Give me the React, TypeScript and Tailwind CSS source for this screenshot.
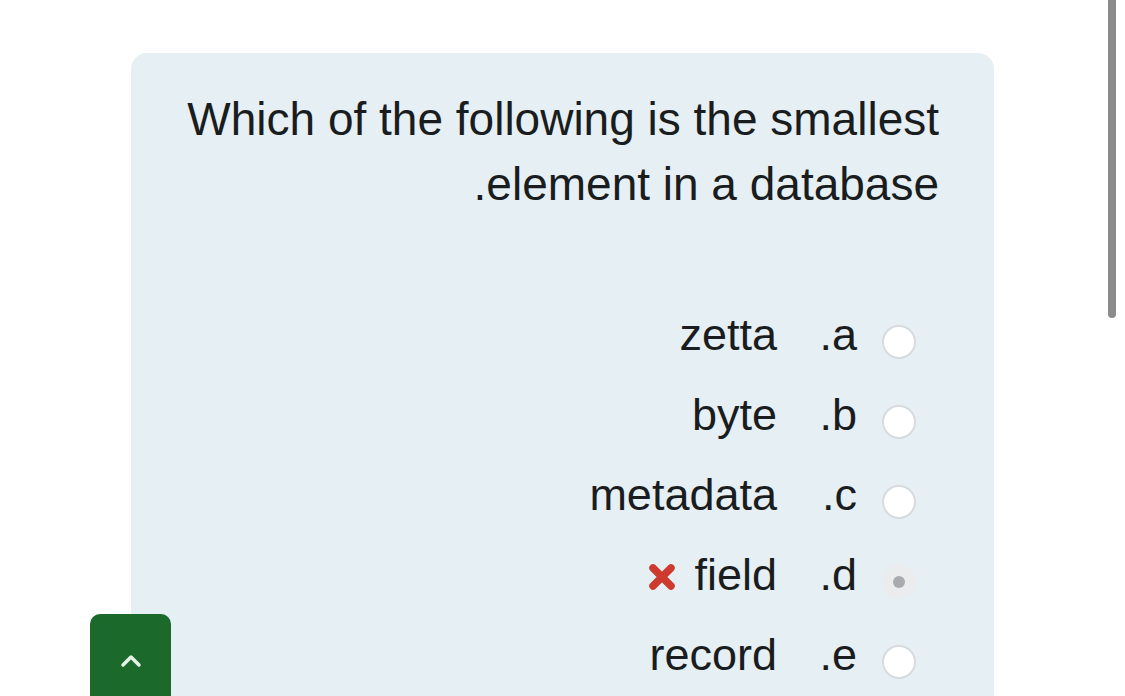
import { ChevronUp } from "lucide-react";

const options = [
  { key: ".a", text: "zetta", state: "empty" },
  { key: ".b", text: "byte", state: "empty" },
  { key: ".c", text: "metadata", state: "empty" },
  { key: ".d", text: "field", state: "wrong" },
  { key: ".e", text: "record", state: "empty" },
];

const RedX = () => (
  <svg width="28" height="28" viewBox="0 0 28 28" className="mr-[18px] mt-[4px]">
    <path d="M5 5 L23 23 M23 5 L5 23" stroke="#cf3a2e" strokeWidth="7.5" strokeLinecap="round" />
  </svg>
);

const App = () => {
  return (
    <div
      className="relative h-[696px] w-[1125px] overflow-hidden bg-white pl-[131px] pt-[53px] text-[#1a1d20]"
      style={{ fontFamily: '"Liberation Sans", Arial, sans-serif' }}
    >
      <div className="h-[700px] w-[863px] rounded-[16px] bg-[#e6eff3] pt-[34px] pr-[55px]">
        <p className="text-right text-[46px] leading-[65px]">
          Which of the following is the smallest
          <br />
          .element in a database
        </p>

        <div className="mt-[78px] mr-[23px] flex flex-col items-end">
          {options.map((o) => (
            <div key={o.key} className="flex h-[80px] items-center text-[45px] leading-[80px]">
              {o.state === "wrong" && <RedX />}
              <span>{o.text}</span>
              <span className="w-[80px] text-right">{o.key}</span>
              <div className="ml-[25px] mt-[14px]">
                {o.state === "wrong" ? (
                  <div className="flex h-[34px] w-[34px] items-center justify-center rounded-full bg-[#ebeced]">
                    <div className="h-[12px] w-[12px] rounded-full bg-[#a8aaad]" />
                  </div>
                ) : (
                  <div className="h-[34px] w-[34px] rounded-full border-2 border-[#d8dbde] bg-white" />
                )}
              </div>
            </div>
          ))}
        </div>
      </div>

      <button className="absolute left-[90px] top-[614px] flex h-[100px] w-[81px] items-start justify-center rounded-[10px] bg-[#1c6a2b] pt-[31px]">
        <ChevronUp size={32} strokeWidth={2.6} color="#e8f2e8" />
      </button>

      <div className="absolute left-[1108px] top-0 h-[318px] w-[8px] rounded-b-full bg-[#8b8b8b]" />
    </div>
  );
};

export default App;
